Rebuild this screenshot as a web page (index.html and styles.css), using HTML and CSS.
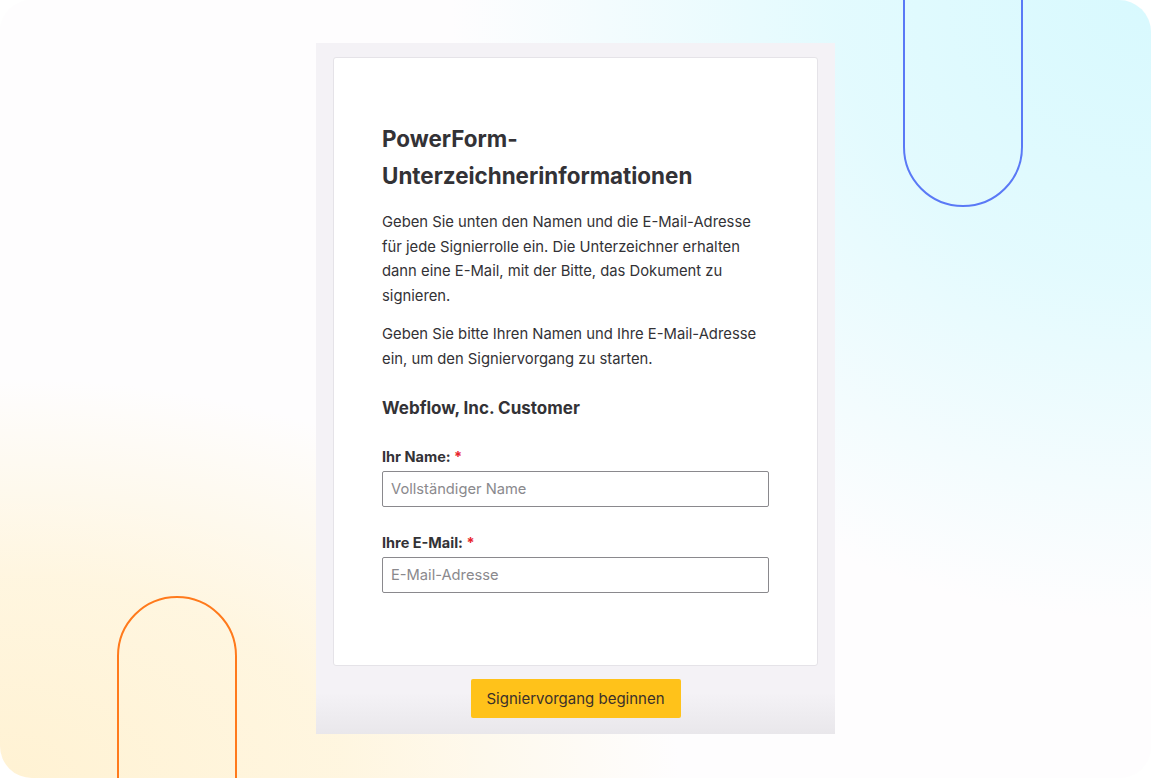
FILE: index.html
```html
<!DOCTYPE html>
<html lang="de">
<head>
<meta charset="utf-8">
<title>PowerForm</title>
<link rel="stylesheet" href="styles.css">
</head>
<body>
<div class="frame">
  <div class="pill pill-blue"></div>
  <div class="pill pill-orange"></div>
  <div class="outer">
    <div class="card">
      <h1 class="title">PowerForm-<br>Unterzeichnerinformationen</h1>
      <p class="text">Geben Sie unten den Namen und die E-Mail-Adresse für jede Signierrolle ein. Die Unterzeichner erhalten dann eine E-Mail, mit der Bitte, das Dokument zu signieren.</p>
      <p class="text">Geben Sie bitte Ihren Namen und Ihre E-Mail-Adresse ein, um den Signiervorgang zu starten.</p>
      <h2 class="role">Webflow, Inc. Customer</h2>
      <div class="field">
        <label class="label">Ihr Name: <span class="req">*</span></label>
        <div class="input">Vollständiger Name</div>
      </div>
      <div class="field">
        <label class="label">Ihre E-Mail: <span class="req">*</span></label>
        <div class="input">E-Mail-Adresse</div>
      </div>
    </div>
    <div class="actions">
      <button class="btn">Signiervorgang beginnen</button>
    </div>
  </div>
</div>
</body>
</html>
```
FILE: styles.css
```css
html, body {
  margin: 0;
  padding: 0;
  background: #ffffff;
}
body {
  font-family: Inter, Lato, sans-serif;
  color: #333236;
}
.frame {
  position: relative;
  width: 1151px;
  height: 778px;
  border-radius: 32px;
  overflow: hidden;
  background:
    radial-gradient(ellipse 700px 620px at 1151px 0px, #d8f9fe 0%, rgba(222,250,254,0.85) 45%, rgba(255,255,255,0) 100%),
    radial-gradient(ellipse 680px 400px at 0px 778px, #fff2d3 0%, rgba(255,244,216,0.8) 50%, rgba(255,255,255,0) 100%),
    #fefdfe;
  display: flex;
  justify-content: center;
  align-items: flex-start;
}
.pill {
  position: absolute;
  width: 120px;
  border-radius: 60px;
  box-sizing: border-box;
}
.pill-blue {
  left: 903px;
  top: -200px;
  height: 407px;
  border: 2px solid #5a79f6;
}
.pill-orange {
  left: 117px;
  top: 596px;
  height: 400px;
  border: 2px solid #ff7a1c;
}
.outer {
  position: relative;
  margin-top: 43px;
  width: 519px;
  height: 691px;
  box-sizing: border-box;
  padding: 14px 17px 0 17px;
  background: linear-gradient(to bottom, #f4f2f6 0%, #f4f2f6 94%, #e9e7eb 100%);
  display: flex;
  flex-direction: column;
}
.card {
  background: #ffffff;
  border: 1px solid #e5e3e8;
  border-radius: 3px;
  height: 609px;
  box-sizing: border-box;
  padding: 62px 48px 0 48px;
}
.title {
  margin: 0;
  font-size: 22.4px;
  line-height: 37px;
  font-weight: 700;
  color: #333236;
}
.text {
  margin: 14px 0 0 0;
  max-width: 382px;
  font-size: 14.8px;
  line-height: 24.5px;
  color: #333236;
}
.title + .text {
  margin-top: 16px;
}
.role {
  margin: 24px 0 0 0;
  font-size: 17px;
  line-height: 26px;
  font-weight: 700;
}
.field {
  margin-top: 26px;
  display: flex;
  flex-direction: column;
}
.role + .field {
  margin-top: 26px;
}
.label {
  font-size: 14.5px;
  line-height: 20px;
  font-weight: 700;
  margin-bottom: 4px;
}
.req {
  color: #e8232c;
}
.input {
  height: 36px;
  box-sizing: border-box;
  border: 1px solid #8a898d;
  border-radius: 2px;
  padding: 0 8px;
  font-size: 14.7px;
  line-height: 34px;
  color: #8a898d;
}
.actions {
  display: flex;
  justify-content: center;
  padding-top: 13px;
}
.btn {
  width: 210px;
  height: 39px;
  border: none;
  border-radius: 2px;
  background: #ffc21a;
  color: #3b302a;
  font-family: Inter, Lato, sans-serif;
  font-size: 15px;
  padding: 0;
  cursor: pointer;
}
```
